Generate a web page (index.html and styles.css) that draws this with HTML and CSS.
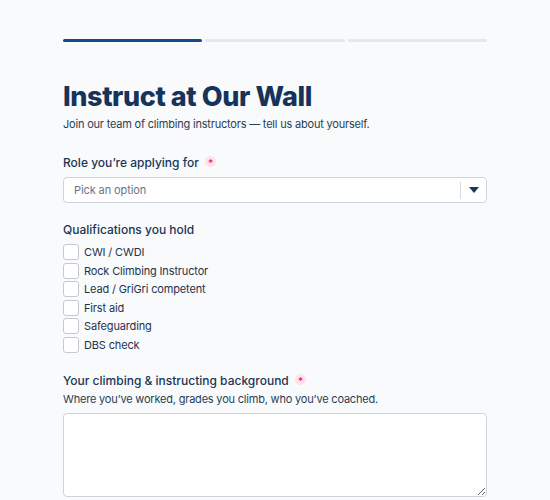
FILE: index.html
```html
<!DOCTYPE html>
<html lang="en">
<head>
    <meta charset="UTF-8">
    <meta name="viewport" content="width=device-width, initial-scale=1.0">
    <title>Instruct at Our Wall</title>
    <link rel="stylesheet" href="styles.css">
</head>
<body>

<div class="page">
    <!-- Step progress -->
    <div class="steps">
        <div class="step active"></div>
        <div class="step"></div>
        <div class="step"></div>
    </div>

    <h1 class="title">Instruct at Our Wall</h1>
    <p class="intro">Join our team of climbing instructors — tell us about yourself.</p>

    <div class="field role">
        <label class="label">Role you’re applying for <span class="req">*</span></label>
        <div class="select">
            <span class="placeholder">Pick an option</span>
            <span class="select-sep"></span>
            <span class="select-arrow">
                <svg width="10" height="6" viewBox="0 0 10 6"><path d="M0 0h10L5 6z" fill="#1b3556"/></svg>
            </span>
        </div>
    </div>

    <div class="field quals">
        <div class="label">Qualifications you hold</div>
        <div class="checks">
            <label class="check"><span class="box"></span>CWI / CWDI</label>
            <label class="check"><span class="box"></span>Rock Climbing Instructor</label>
            <label class="check"><span class="box"></span>Lead / GriGri competent</label>
            <label class="check"><span class="box"></span>First aid</label>
            <label class="check"><span class="box"></span>Safeguarding</label>
            <label class="check"><span class="box"></span>DBS check</label>
        </div>
    </div>

    <div class="field background">
        <label class="label">Your climbing &amp; instructing background <span class="req">*</span></label>
        <div class="help">Where you’ve worked, grades you climb, who you’ve coached.</div>
        <textarea class="textarea"></textarea>
        <div class="counter">0 / 2000</div>
    </div>
</div>

</body>
</html>
```

FILE: styles.css
```css
body {
    margin: 0;
    background-color: #f9fafb;
    font-family: Inter, "Noto Sans", sans-serif;
    color: #1b3556;
}

.page {
    width: 424px;
    margin: 0 auto;
    padding-top: 39px;
}

.steps {
    display: flex;
    gap: 3px;
}

.step {
    flex: 1;
    height: 3px;
    background-color: #e3e8f0;
    border-radius: 2px;
}

.step.active {
    background-color: #134a8e;
}

.title {
    margin: 38px 0 0;
    font-size: 27px;
    line-height: 34px;
    font-weight: 800;
    letter-spacing: -0.4px;
    color: #16335a;
}

.intro {
    margin: 2px 0 0;
    font-size: 11px;
    line-height: 16px;
    letter-spacing: -0.2px;
    color: #2a3d55;
}

.label {
    display: block;
    font-size: 12px;
    line-height: 18px;
    font-weight: 500;
    color: #1b3556;
}

.req {
    display: inline-block;
    width: 11px;
    height: 11px;
    margin-left: 3px;
    border-radius: 50%;
    background-color: #fde4ec;
    color: #e0245e;
    font-size: 10px;
    line-height: 14px;
    text-align: center;
}

/* Role select */
.role {
    margin-top: 22px;
}

.select {
    display: flex;
    align-items: center;
    height: 24px;
    margin-top: 5px;
    background: #fff;
    border: 1px solid #cdd3dc;
    border-radius: 4px;
}

.placeholder {
    flex: 1;
    padding-left: 10px;
    font-size: 11px;
    letter-spacing: -0.1px;
    color: #6b7585;
}

.select-sep {
    width: 1px;
    height: 17px;
    background-color: #d5dae2;
}

.select-arrow {
    display: flex;
    align-items: center;
    justify-content: center;
    width: 25px;
}

/* Qualifications */
.quals {
    margin-top: 18px;
}

.checks {
    display: flex;
    flex-direction: column;
    gap: 2.6px;
    margin-top: 5px;
}

.check {
    display: flex;
    align-items: center;
    font-size: 11px;
    line-height: 16px;
    letter-spacing: -0.15px;
    color: #1f3350;
}

.box {
    width: 14px;
    height: 14px;
    margin-right: 5px;
    background: #fff;
    border: 1px solid #c4cad4;
    border-radius: 3px;
}

/* Background textarea */
.background {
    margin-top: 19px;
}

.help {
    margin-top: 1px;
    font-size: 11px;
    line-height: 16px;
    letter-spacing: -0.2px;
    color: #2a3d55;
}

.textarea {
    display: block;
    box-sizing: border-box;
    width: 424px;
    height: 84px;
    margin-top: 6px;
    background: #fff;
    border: 1px solid #cdd3dc;
    border-radius: 4px;
    font-family: inherit;
}

.counter {
    margin-top: 1px;
    text-align: right;
    font-size: 9px;
    line-height: 12px;
    color: #9aa3b0;
}
```
